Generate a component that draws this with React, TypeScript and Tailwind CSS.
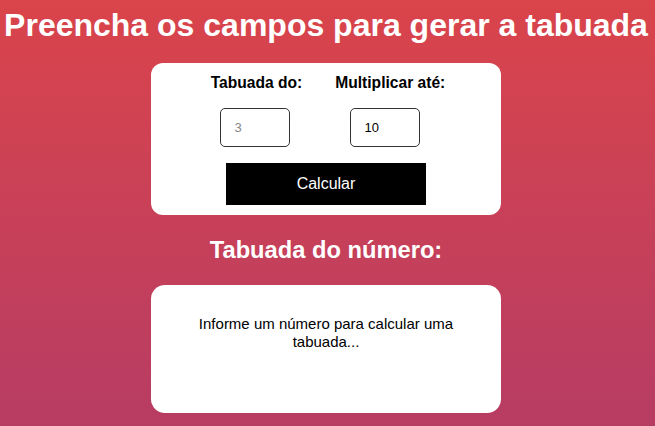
export default function App() {
  return (
    <div
      className="w-[655px] h-[426px] overflow-hidden bg-gradient-to-b from-[#da444a] to-[#b73c63] flex flex-col items-center pr-[3px]"
      style={{ fontFamily: '"Liberation Sans", Arial, sans-serif' }}
    >
      <h1 className="text-white font-bold text-[32px] leading-[36px] mt-[7px] whitespace-nowrap">
        Preencha os campos para gerar a tabuada
      </h1>
      <div className="mt-[20px] w-[350px] h-[152px] bg-white rounded-[12px] flex flex-col items-center">
        <div className="flex gap-[33px] mt-[11px] pl-[4px] text-[15.6px] font-bold text-black leading-[18px]">
          <span>Tabuada do:</span>
          <span>Multiplicar até:</span>
        </div>
        <div className="flex gap-[60px] mt-[16px] pr-[13px]">
          <input
            placeholder="3"
            className="w-[70px] h-[39px] border border-[#333] rounded-[5px] pl-[14px] text-[13px] text-black placeholder:text-[#888] outline-none"
          />
          <input
            defaultValue="10"
            className="w-[70px] h-[39px] border border-[#333] rounded-[5px] pl-[14px] text-[13px] text-black outline-none"
          />
        </div>
        <button className="mt-[16px] w-[200px] h-[42px] bg-black text-white text-[16px]">
          Calcular
        </button>
      </div>
      <h2 className="mt-[21px] text-white font-bold text-[23.7px] leading-[28px]">
        Tabuada do número:
      </h2>
      <div className="mt-[21px] w-[350px] h-[128px] bg-white rounded-[14px] flex justify-center">
        <p className="mt-[30px] w-[280px] text-center text-[15px] leading-[18px] text-black">
          Informe um número para calcular uma tabuada...
        </p>
      </div>
    </div>
  );
}
